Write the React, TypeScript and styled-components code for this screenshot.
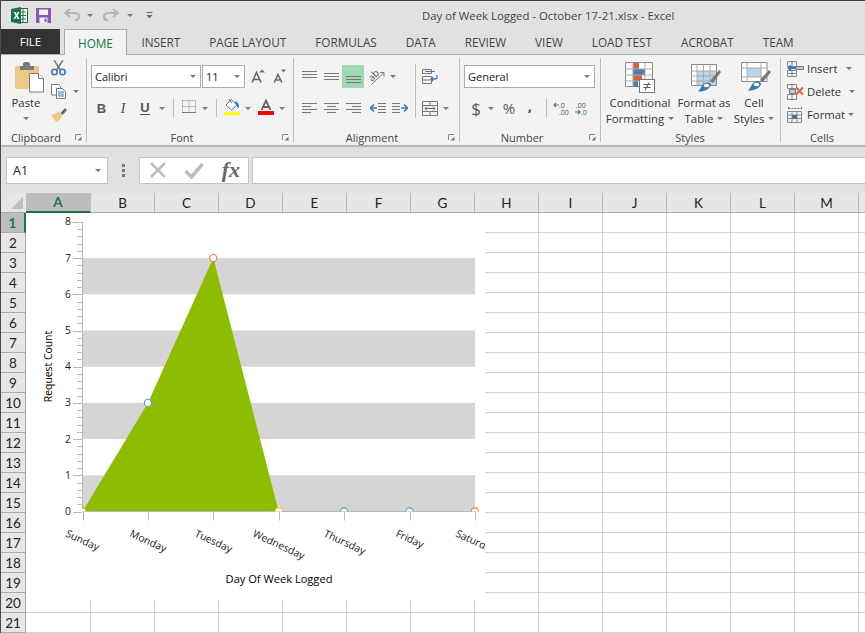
import React from "react";
import styled, { createGlobalStyle } from "styled-components";

const Global = createGlobalStyle`
  html, body { margin: 0; padding: 0; background: #fff; }
  body { width: 865px; height: 633px; overflow: hidden; }
  #root { width: 865px; height: 633px; }
  svg { flex: none; }
`;

const UI = `"Open Sans", "Noto Sans", sans-serif`;
const CELL = `Lato, "Noto Sans", sans-serif`;

const Page = styled.div`
  width: 865px; height: 633px; overflow: hidden; display: flex; flex-direction: column;
  font-family: ${UI}; color: #333; border-left: 1px solid #4a4a4a; box-sizing: border-box;
`;
const TitleBar = styled.header`
  height: 29px; flex: none; background: #e1e1e1; border-top: 1px solid #444; box-sizing: border-box;
  display: flex; align-items: center; padding-left: 10px;
`;
const QuickSlot = styled.span<{ $w: number }>`
  width: ${p => p.$w}px; display: flex; align-items: center; justify-content: center; flex: none;
`;
const TitleText = styled.div`
  font-size: 11.37px; color: #444; margin-left: 259px; white-space: nowrap;
`;
const TabBar = styled.nav`
  height: 25px; flex: none; background: #e1e1e1; display: flex; align-items: stretch; position: relative;
`;
const FileTab = styled.div`
  width: 59px; background: #333; color: #fff; font-size: 11.5px; display: flex; align-items: center; justify-content: center; margin-right: 4px;
`;
const Tab = styled.div<{ $active?: boolean; $pad?: number }>`
  font-size: 11.75px; padding: 0 ${p => p.$pad ?? 14.5}px; display: flex; align-items: center; white-space: nowrap;
  color: ${p => (p.$active ? "#217346" : "#444")};
  ${p => p.$active ? "background:#f3f3f3;border:1px solid #ababab;border-bottom:none;margin-bottom:-1px;position:relative;z-index:1;" : ""}
`;
const Ribbon = styled.div`
  height: 93px; flex: none; background: #f3f3f3; border-top: 1px solid #ababab; border-bottom: 2px solid #b5b5b5;
  box-sizing: border-box; display: flex;
`;
const Group = styled.section<{ $w: number; $pl?: number; $last?: boolean }>`
  width: ${p => p.$w}px; flex: none; box-sizing: border-box; margin: 3px 0; display: flex; flex-direction: column;
  padding-left: ${p => p.$pl ?? 0}px; position: relative;
  ${p => (p.$last ? "" : "border-right: 1px solid #bdbdbd;")}
`;
const GroupBody = styled.div`
  flex: 1; display: flex; min-height: 0;
`;
const GroupLabel = styled.div<{ $cx: number }>`
  height: 16px; font-size: 11px; color: #444; text-align: center; line-height: 16px; white-space: nowrap;
  width: ${p => p.$cx * 2}px; margin-bottom: -4px;
`;
const Launcher = styled.span`
  position: absolute; right: 4px; bottom: 1px; width: 7px; height: 7px; display: block;
`;
const Column = styled.div<{ $w?: number; $gap?: number; $pt?: number }>`
  display: flex; flex-direction: column; align-items: center;
  ${p => (p.$w ? `width:${p.$w}px;` : "")} flex: none;
  gap: ${p => p.$gap ?? 0}px; padding-top: ${p => p.$pt ?? 0}px;
`;
const Stack = styled.div<{ $pt?: number; $gap?: number; $mt?: number }>`
  display: flex; flex-direction: column; padding-top: ${p => p.$pt ?? 7}px; gap: ${p => p.$gap ?? 10}px; flex: none;
  margin-top: ${p => p.$mt ?? 0}px;
`;
const Row = styled.div<{ $h?: number }>`
  display: flex; align-items: center; height: ${p => p.$h ?? 23}px; flex: none;
`;
const Cell = styled.span<{ $w: number; $ml?: number; $active?: boolean }>`
  width: ${p => p.$w}px; height: 100%; margin-left: ${p => p.$ml ?? 0}px; flex: none;
  display: flex; align-items: center; justify-content: center;
  ${p => (p.$active ? "background:#a0d8b4;" : "")}
`;
const VSep = styled.i<{ $h?: number }>`
  width: 1px; height: ${p => p.$h ?? 18}px; background: #bdbdbd; display: block;
`;
const Caret = styled.i<{ $ml?: number; $mt?: number }>`
  display: block; flex: none; width: 0; height: 0; border-left: 3px solid transparent; border-right: 3px solid transparent;
  border-top: 3px solid #777; margin-left: ${p => p.$ml ?? 0}px; margin-top: ${p => p.$mt ?? 0}px;
`;
const Select = styled.div<{ $w: number; $ml?: number }>`
  width: ${p => p.$w}px; height: 23px; box-sizing: border-box; background: #fff; border: 1px solid #ababab; flex: none;
  margin-left: ${p => p.$ml ?? 0}px; display: flex; align-items: center; justify-content: space-between; padding: 0 4px 0 3px;
  font-family: ${UI}; font-size: 11px; color: #222;
`;
const IconArt = styled.span<{ $ml: number; $h: number }>`
  display: block; height: ${p => p.$h}px; margin-left: ${p => p.$ml}px; flex: none;
`;
const BigLabel = styled.div`
  font-size: 11.4px; color: #333; line-height: 15.5px; text-align: center; white-space: nowrap;
  display: flex; align-items: center; justify-content: center; gap: 4px;
`;
const CellsRow = styled.div`
  display: flex; align-items: center; height: 23px; flex: none; font-size: 11.3px; color: #333;
`;
const CellsText = styled.span`
  margin-left: 3px; white-space: nowrap;
`;
const FormulaBar = styled.div`
  height: 46px; flex: none; background: #e1e1e1; display: flex; align-items: center; padding-left: 5px; box-sizing: border-box;
`;
const NameBox = styled.div`
  width: 102px; height: 27px; box-sizing: border-box; background: #fff; border: 1px solid #c4c4c4; display: flex; align-items: center; justify-content: space-between;
  padding: 0 6px; font-family: ${UI}; font-size: 12.5px; color: #222;
`;
const Dots = styled.span`
  width: 31px; display: flex; align-items: center; justify-content: center; flex: none;
`;
const FxButtons = styled.div`
  width: 110px; height: 27px; box-sizing: border-box; background: #fff; border: 1px solid #c4c4c4; display: flex; align-items: center; justify-content: space-between; padding: 0 8px 0 9px;
`;
const FormulaInput = styled.div`
  flex: 1; height: 27px; margin-left: 3px; box-sizing: border-box; background: #fff; border: 1px solid #c4c4c4; border-right: none;
`;
const FxText = styled.span`
  font-family: "Liberation Serif", serif; font-style: italic; font-weight: 700; font-size: 22px; color: #666; line-height: 1;
`;
const Sheet = styled.div`
  flex: 1; position: relative; overflow: hidden; background: #fff;
`;
const HeadRow = styled.div`
  display: flex; height: 20px;
`;
const Corner = styled.div`
  width: 25px; flex: none; background: #e6e6e6; border-bottom: 1px solid #ababab; box-sizing: border-box; position: relative; display: flex; align-items: flex-end; justify-content: flex-end; padding: 0 3px 3px 0;
`;
const ColHead = styled.div<{ $w: number; $sel?: boolean }>`
  width: ${p => p.$w}px; flex: none; box-sizing: border-box; font-family: ${CELL}; font-size: 13.5px; display: flex; align-items: center; justify-content: center;
  background: ${p => (p.$sel ? "#bdbdbd" : "#e6e6e6")}; color: ${p => (p.$sel ? "#217346" : "#222")};
  border-right: 1px solid ${p => (p.$sel ? "#bdbdbd" : "#b8b8b8")};
  border-bottom: ${p => (p.$sel ? "2px solid #217346" : "1px solid #ababab")};
  ${p => (p.$sel ? "font-weight:700;" : "")}
`;
const GridRow = styled.div`
  display: flex; height: 20px;
`;
const RowHead = styled.div<{ $sel?: boolean }>`
  width: 25px; flex: none; box-sizing: border-box; font-family: ${CELL}; font-size: 13.5px; display: flex; align-items: center; justify-content: center;
  background: ${p => (p.$sel ? "#bdbdbd" : "#e6e6e6")}; color: ${p => (p.$sel ? "#217346" : "#222")};
  border-bottom: 1px solid #ababab;
  border-right: ${p => (p.$sel ? "2px solid #217346" : "1px solid #ababab")};
  ${p => (p.$sel ? "font-weight:700;" : "")}
`;
const GridCell = styled.div<{ $w: number }>`
  width: ${p => p.$w}px; flex: none; box-sizing: border-box; border-right: 1px solid #d4d4d4; border-bottom: 1px solid #d4d4d4;
`;
const ChartLayer = styled.svg`
  position: absolute; left: 25px; top: 20px; width: 459px; height: 387px; background: #fff; display: block;
`;
const ChartText = styled.text<{ $size: number }>`
  font-family: ${UI}; font-size: ${p => p.$size}px; fill: #000;
`;
const TickLabel = styled.text`
  font-family: ${UI}; font-size: 10.3px; fill: #222;
`;

/* ---------- icons ---------- */
const ExcelLogo = () => (
  <svg width="17" height="17" viewBox="0 0 17 17">
    <rect x="6" y="1.500" width="10.500" height="14" fill="#fff" stroke="#1e7145" />
    <path d="M9 5h6M9 8.500h6M9 12h6M12 2v13" stroke="#1e7145" />
    <path d="M0 2l10-2v17L0 15z" fill="#1e7145" />
    <path d="M2.600 5h1.900l1 2.200L6.600 5h1.800L6.500 8.500 8.500 12H6.600L5.400 9.800 4.300 12H2.500l2.100-3.500z" fill="#fff" />
  </svg>
);
const SaveIcon = () => (
  <svg width="15" height="15" viewBox="0 0 15 15">
    <path d="M0 0h15v15H0z" fill="#8c56b3" />
    <rect x="3" y="1.500" width="9" height="5.500" fill="#f4eef8" />
    <rect x="3.500" y="9.500" width="8" height="5.500" fill="#f4eef8" />
    <rect x="8.500" y="10.500" width="2" height="3.500" fill="#8c56b3" />
  </svg>
);
const UndoIcon = ({ flip }: { flip?: boolean }) => (
  <svg width="17" height="14" viewBox="0 0 17 14" style={flip ? { transform: "scaleX(-1)" } : undefined}>
    <path d="M6 1L1.500 5 6 9M2 5h8.500c3.500 0 4.500 2 4.500 3.500S14 12 11 12.500" fill="none" stroke="#b4b4b4" strokeWidth="2.200" />
  </svg>
);
const CustomizeIcon = () => (
  <svg width="7" height="7" viewBox="0 0 7 7">
    <path d="M0.500 0.500h6" stroke="#666" />
    <path d="M0.500 3h6L3.500 6.500z" fill="#666" />
  </svg>
);
const PasteIcon = () => (
  <svg width="30" height="31" viewBox="0 0 30 31" style={{ display: "block" }}>
    <rect x="0" y="4" width="24" height="23" rx="1.500" fill="#edc987" />
    <path d="M5 8V4h3V1.500L9.500 0h4L15 1.500V4h4v4z" fill="#7a7a7a" />
    <path d="M14.500 11.500h9l5 5v13.500h-14z" fill="#fff" stroke="#7c7c7c" />
    <path d="M23.500 11.500v5h5" fill="#fff" stroke="#7c7c7c" />
  </svg>
);
const ScissorsIcon = () => (
  <svg width="15" height="16" viewBox="0 0 15 16">
    <path d="M3 0l6.500 10M12 0L5.500 10" stroke="#777" strokeWidth="1.400" />
    <circle cx="3.500" cy="12" r="2.700" fill="none" stroke="#3f78ad" strokeWidth="1.600" />
    <circle cx="11.500" cy="12" r="2.700" fill="none" stroke="#3f78ad" strokeWidth="1.600" />
  </svg>
);
const CopyIcon = () => (
  <svg width="15" height="15" viewBox="0 0 15 15">
    <path d="M.5.500h7l2 2V11H.5z" fill="#fff" stroke="#777" />
    <path d="M5.500 4.500h6l3 3v7h-9z" fill="#fff" stroke="#777" />
    <path d="M7 8h6M7 10h6M7 12h6" stroke="#3f78ad" />
  </svg>
);
const BrushIcon = () => (
  <svg width="16" height="15" viewBox="0 0 16 15">
    <path d="M9.500 6L14 1l2 2-4.500 5z" fill="#666" />
    <path d="M11 9L8 4.500 5 6.500 0 8l5 7 4-2z" fill="#edc987" />
  </svg>
);
const LauncherIcon = () => (
  <svg width="7" height="7" viewBox="0 0 7 7" style={{ display: "block" }}>
    <path d="M.5 6V.5H6" fill="none" stroke="#888" />
    <path d="M6.500 2.500v4h-4z" fill="#777" />
  </svg>
);
const GrowA = ({ down }: { down?: boolean }) => (
  <svg width="16" height="16" viewBox="0 0 16 16">
    <path d={down ? "M1.200 13.500L5 5.500l3.800 8M2.600 11h4.800" : "M2 13.500l4.500-10 4.500 10M3.600 10.500h5.800"} fill="none" stroke="#666" strokeWidth="1.600" />
    <path d={down ? "M8 .5h5L10.500 3.500z" : "M9 3.500h6L12 .5z"} fill="#3f78ad" />
  </svg>
);
const Letter = styled.span<{ $b?: boolean; $i?: boolean; $u?: boolean }>`
  font-family: "Liberation Serif", serif; font-size: 15px; color: #555; line-height: 1; font-weight: ${p => (p.$b ? 700 : 400)};
  font-style: ${p => (p.$i ? "italic" : "normal")}; ${p => (p.$u ? "border-bottom: 1.500px solid #555; font-size: 13px; font-family: 'Liberation Sans', sans-serif; font-weight:700;" : "")}
  ${p => (p.$b ? "font-family:'Liberation Sans',sans-serif;font-size:13px;" : "")}
`;
const BordersIcon = () => (
  <svg width="14" height="16" viewBox="0 0 14 16">
    <path d="M.5.500h13v12M.5.500v12M7 .5v12M.5 6.500h13" fill="none" stroke="#888" strokeDasharray="1 1" />
    <path d="M0 12.500h14" stroke="#777" />
  </svg>
);
const FillIcon = () => (
  <svg width="18" height="20" viewBox="0 0 18 20">
    <path d="M3 7l5-5.500 6 5.500-5.500 5z" fill="#fff" stroke="#666" />
    <path d="M6 1l2.500 4" stroke="#666" fill="none" />
    <path d="M12 3.500c2.500 0 4 2 4 5l-1 2-2-4z" fill="#3f78ad" />
    <rect x="1" y="14" width="16" height="3" fill="#ffff00" />
  </svg>
);
const FontColorIcon = () => (
  <svg width="18" height="20" viewBox="0 0 18 20">
    <path d="M5.500 12L10 2.500 14.500 12M6.800 9h6.400" fill="none" stroke="#666" strokeWidth="1.800" />
    <rect x="2" y="13" width="16" height="4" fill="#ff0000" />
  </svg>
);
const Lines = ({ d, w = 15 }: { d: string; w?: number }) => (
  <svg width={w} height="13" viewBox={`0 0 ${w} 13`}><path d={d} stroke="#777" fill="none" /></svg>
);
const OrientIcon = () => (
  <svg width="17" height="16" viewBox="0 0 17 16">
    <text x="1" y="10" fontSize="10" fontFamily="'Open Sans',sans-serif" fill="#555" transform="rotate(-45 6 8)">ab</text>
    <path d="M3.500 15.500L15.500 4M12 3.500h4v4" stroke="#777" fill="none" />
  </svg>
);
const IndentIcon = ({ flip }: { flip?: boolean }) => (
  <svg width="16" height="13" viewBox="0 0 16 13" style={flip ? { transform: "scaleX(-1)" } : undefined}>
    <path d="M8 1.500h8M8 4.500h8M8 7.500h8M8 10.500h8" stroke="#777" />
    <path d="M4 2.500L.5 6 4 9.500M1 6h6" fill="none" stroke="#3f78ad" strokeWidth="1.600" />
  </svg>
);
const WrapIcon = () => (
  <svg width="16" height="16" viewBox="0 0 16 16">
    <path d="M.5.500h9v4h-9zM.5 7.500h9v7h-9zM.5 11h9" fill="none" stroke="#777" />
    <path d="M3 2.500h10" stroke="#3f78ad" />
    <path d="M15 6v2.500c0 1-.5 1.500-1.500 1.500H9M11 8l-2 2 2 2" fill="none" stroke="#3f78ad" strokeWidth="1.300" />
  </svg>
);
const MergeIcon = () => (
  <svg width="16" height="15" viewBox="0 0 16 15">
    <path d="M.5.500h15v14H.5zM.5 4.500h15M.5 10.500h15M8 .5v4M8 10.500v4" fill="none" stroke="#777" />
    <path d="M3 7.500h10M5 5.500l-2 2 2 2M11 5.500l2 2-2 2" fill="none" stroke="#3f78ad" />
  </svg>
);
const Glyph = styled.span<{ $size?: number; $lift?: number; $bold?: boolean }>`
  font-family: ${UI}; font-size: ${p => p.$size ?? 15}px; color: #555; line-height: 1; font-weight: ${p => (p.$bold ? 700 : 400)};
  margin-bottom: ${p => p.$lift ?? 0}px;
`;
const DecimalIcon = ({ more }: { more?: boolean }) => (
  <svg width="19" height="15" viewBox="0 0 19 15">
    <text x={more ? 6 : 1} y="6.500" fontSize="7" fontFamily="'Open Sans',sans-serif" fill="#555">{more ? ".0" : ".00"}</text>
    <text x="6" y="14" fontSize="7" fontFamily="'Open Sans',sans-serif" fill="#555">{more ? ".00" : ".0"}</text>
    <path d={more ? "M6 4H1M3 2L1 4l2 2" : "M0 11h5M3 9l2 2-2 2"} fill="none" stroke="#3f78ad" strokeWidth="1.200" />
  </svg>
);
const ConditionalIcon = () => (
  <svg width="30" height="31" viewBox="0 0 30 31">
    <path d="M.5.500h27v24H.5z" fill="#fff" stroke="#8a8a8a" />
    <rect x="8" y="1" width="6" height="6" fill="#d9603a" />
    <rect x="8" y="7" width="12" height="6" fill="#4a7fb5" />
    <rect x="8" y="13" width="9" height="6" fill="#d9603a" />
    <rect x="8" y="19" width="5" height="6" fill="#4a7fb5" />
    <path d="M8 .5v24M20 .5v24M.5 7h27M.5 13h27M.5 19h27" stroke="#aaa" fill="none" />
    <rect x="14.500" y="17.500" width="15" height="13" fill="#fff" stroke="#777" />
    <path d="M18.500 22.500h7M18.500 25.500h7M24 20.500l-4 8" stroke="#555" fill="none" />
  </svg>
);
const TableBrushIcon = () => (
  <svg width="30" height="31" viewBox="0 0 30 31" style={{ display: "block" }}>
    <path d="M.5 2.500h25v21H.5z" fill="#fff" stroke="#8a8a8a" />
    <rect x="6" y="9" width="19" height="14" fill="#bdd3e8" />
    <path d="M.5 9h25M.5 14h25M.5 19h25M6 2.500v21M12.500 2.500v21M19 2.500v21" stroke="#aaa" fill="none" />
    <path d="M28 8l2 2-8 11-3-2z" fill="#777" />
    <path d="M7 29.500c3-2 3-7 7-8.500 3-1 6 0 6 2-1 4-7 7-13 6.500z" fill="#3f78ad" />
    <ellipse cx="15.500" cy="23.500" rx="2.800" ry="1.800" fill="#fff" />
  </svg>
);
const CellBrushIcon = () => (
  <svg width="30" height="31" viewBox="0 0 30 31" style={{ display: "block" }}>
    <path d="M.5.500h25.500v19H.5z" fill="#fff" stroke="#8a8a8a" />
    <rect x="6" y="6" width="14" height="9" fill="#bdd3e8" />
    <path d="M.5 6h25.500M.5 15h25.500M6 .5v19M20 .5v19" stroke="#aaa" fill="none" />
    <path d="M28 8l2 2-8 10-3-2z" fill="#777" />
    <path d="M7 28.500c3-2 3-7 7-8.500 3-1 6 0 6 2-1 4-7 7-13 6.500z" fill="#3f78ad" />
    <ellipse cx="15.500" cy="22.500" rx="2.800" ry="1.800" fill="#fff" />
  </svg>
);
const InsertIcon = () => (
  <svg width="17" height="16" viewBox="0 0 17 16">
    <path d="M.5.500h9v5h-9zM.5 9.500h9v6h-9zM5 .5v5M5 9.500v6M.5 12.500h9" fill="none" stroke="#888" />
    <path d="M9 5.500h7.500v3H9z" fill="#bcd" stroke="#777" />
    <path d="M9 7H1M4 4.500L1.500 7 4 9.500" fill="none" stroke="#2f78bd" strokeWidth="1.900" />
  </svg>
);
const DeleteIcon = () => (
  <svg width="17" height="16" viewBox="0 0 17 16">
    <path d="M.5.500h9v4h-9zM.5 10.500h9v5h-9zM5 .5v4M5 10.500v5" fill="none" stroke="#888" />
    <path d="M2.500 5.500h6v4h-6z" fill="#bcd" stroke="#777" />
    <path d="M9 3.500l7 7M16 3.500l-7 7" stroke="#e0603a" strokeWidth="2" />
  </svg>
);
const FormatIcon = () => (
  <svg width="17" height="16" viewBox="0 0 17 16">
    <path d="M1.500 1.500h13M1.500 0v3M14.500 0v3" stroke="#3f78ad" strokeDasharray="2 1" />
    <path d="M.5 4.500h14v11H.5zM.5 8h14M.5 11.500h14M5 4.500v11M10 4.500v11" fill="none" stroke="#888" />
    <rect x="5" y="8" width="5" height="4" fill="#3f78ad" />
  </svg>
);
const BigCross = () => (
  <svg width="18" height="18" viewBox="0 0 18 18"><path d="M2 2l14 14M16 2L2 16" stroke="#bcbcbc" strokeWidth="2.500" /></svg>
);
const BigCheck = () => (
  <svg width="20" height="17" viewBox="0 0 20 17"><path d="M1.500 9l6 6L18.500 2" fill="none" stroke="#bcbcbc" strokeWidth="3.500" /></svg>
);
const DotsIcon = () => (
  <svg width="3" height="13" viewBox="0 0 3 13"><path d="M0 0h3v3H0zM0 5h3v3H0zM0 10h3v3H0z" fill="#777" /></svg>
);
const CornerTriangle = () => (
  <svg width="12" height="12" viewBox="0 0 12 12"><path d="M12 0v12H0z" fill="#bdbdbd" /></svg>
);

/* ---------- chart ---------- */
const Y0 = 511.5;
const UNIT = 36.2;
const X0 = 82.5;
const STEP = 65.4;
const DAYS = ["Sunday", "Monday", "Tuesday", "Wednesday", "Thursday", "Friday", "Saturday"];
const LABEL_X = [65, 129, 194, 252, 323, 395, 455];
const VALUES = [0, 3, 7, 0, 0, 0, 0];
const MARK = ["#8cbd00", "#5b9bd5", "#ed7d31", "#e6e61a", "#4fae6a", "#35b3b9", "#ed7d31"];
const BANDS = [6, 4, 2, 0];

const px = (i: number) => X0 + STEP * i;
const py = (v: number) => Y0 - UNIT * v;

const Chart = () => (
  <ChartLayer viewBox="26 213 459 387">
    <defs>
      <clipPath id="plotClip"><rect x="82" y="213" width="403" height="298.500" /></clipPath>
    </defs>
    {BANDS.map(b => (
      <rect key={b} x={X0} y={py(b + 1)} width={392.5} height={UNIT} fill="#d6d4d5" />
    ))}
    <polygon points={VALUES.slice(0, 4).map((v, i) => `${px(i)},${py(v)}`).join(" ")} fill="#8cbd00" />
    <path d={`M${X0} 222V${Y0}H475.500`} fill="none" stroke="#b8b8b8" />
    {Array.from({ length: 41 }, (_, i) => {
      const y = Math.round(py(i / 5)) + 0.5;
      return <path key={i} d={`M${i % 5 === 0 ? 73 : 77} ${y}H82`} stroke="#b8b8b8" />;
    })}
    {DAYS.map((_, i) => (
      <path key={i} d={`M${Math.round(px(i)) + 0.5} ${Y0}V520.500`} stroke="#b8b8b8" />
    ))}
    <g clipPath="url(#plotClip)">
      {VALUES.map((v, i) => (
        <circle key={i} cx={px(i)} cy={py(v)} r="3.600" fill="#fff" stroke={MARK[i]} strokeWidth="1.100" />
      ))}
    </g>
    {Array.from({ length: 9 }, (_, i) => (
      <TickLabel key={i} x="71" y={py(i) + 3.5} textAnchor="end">{i}</TickLabel>
    ))}
    {DAYS.map((d, i) => (
      <TickLabel key={d} x={LABEL_X[i]} y="536" transform={`rotate(25 ${LABEL_X[i]} 536)`}>{d}</TickLabel>
    ))}
    <ChartText $size={11.1} x="279" y="583" textAnchor="middle">Day Of Week Logged</ChartText>
    <ChartText $size={10.4} x="52" y="366.500" textAnchor="middle" transform="rotate(-90 52 366.500)">Request Count</ChartText>
  </ChartLayer>
);

/* ---------- page ---------- */
const TABS = ["INSERT", "PAGE LAYOUT", "FORMULAS", "DATA", "REVIEW", "VIEW", "LOAD TEST", "ACROBAT", "TEAM"];
const COLS = ["A", "B", "C", "D", "E", "F", "G", "H", "I", "J", "K", "L", "M", "N"];
const colW = (i: number) => (i === 0 ? 65 : 64);
const ROWS = Array.from({ length: 21 }, (_, i) => i + 1);

export default function App() {
  return (
    <Page>
      <Global />
      <TitleBar>
        <QuickSlot $w={17}><ExcelLogo /></QuickSlot>
        <QuickSlot $w={31}><SaveIcon /></QuickSlot>
        <QuickSlot $w={26}><UndoIcon /></QuickSlot>
        <QuickSlot $w={10}><Caret /></QuickSlot>
        <QuickSlot $w={30}><UndoIcon flip /></QuickSlot>
        <QuickSlot $w={10}><Caret /></QuickSlot>
        <QuickSlot $w={28}><CustomizeIcon /></QuickSlot>
        <TitleText>Day of Week Logged - October 17-21.xlsx - Excel</TitleText>
      </TitleBar>
      <TabBar>
        <FileTab>FILE</FileTab>
        <Tab $active $pad={13}>HOME</Tab>
        {TABS.map(t => <Tab key={t}>{t}</Tab>)}
      </TabBar>
      <Ribbon>
        <Group $w={86}>
          <GroupBody>
            <Column $w={50} $pt={4} $gap={2}>
              <IconArt $ml={7} $h={31}><PasteIcon /></IconArt>
              <BigLabel>Paste</BigLabel>
              <Caret $mt={4} />
            </Column>
            <Stack $pt={2} $gap={7}>
              <Row $h={16}><Cell $w={15}><ScissorsIcon /></Cell></Row>
              <Row $h={16}><Cell $w={15}><CopyIcon /></Cell><Caret $ml={7} /></Row>
              <Row $h={16}><Cell $w={16}><BrushIcon /></Cell></Row>
            </Stack>
          </GroupBody>
          <GroupLabel $cx={35}>Clipboard</GroupLabel>
          <Launcher><LauncherIcon /></Launcher>
        </Group>

        <Group $w={207} $pl={4}>
          <GroupBody>
            <Stack>
              <Row>
                <Select $w={110}><span>Calibri</span><Caret /></Select>
                <Select $w={43} $ml={1}><span>11</span><Caret /></Select>
                <Cell $w={20} $ml={3}><GrowA /></Cell>
                <Cell $w={20} $ml={3}><GrowA down /></Cell>
              </Row>
              <Row $h={20}>
                <Cell $w={21}><Letter $b>B</Letter></Cell>
                <Cell $w={22}><Letter $i>I</Letter></Cell>
                <Cell $w={22}><Letter $u>U</Letter></Cell>
                <Cell $w={12}><Caret /></Cell>
                <Cell $w={10}><VSep /></Cell>
                <Cell $w={21}><BordersIcon /></Cell>
                <Cell $w={12}><Caret /></Cell>
                <Cell $w={10}><VSep /></Cell>
                <Cell $w={22}><FillIcon /></Cell>
                <Cell $w={10}><Caret /></Cell>
                <Cell $w={24}><FontColorIcon /></Cell>
                <Cell $w={10}><Caret /></Cell>
              </Row>
            </Stack>
          </GroupBody>
          <GroupLabel $cx={91}>Font</GroupLabel>
          <Launcher><LauncherIcon /></Launcher>
        </Group>

        <Group $w={166} $pl={4}>
          <GroupBody>
            <Stack>
              <Row>
                <Cell $w={22}><Lines d="M0 1.500h15M0 4.500h15M0 7.500h15" /></Cell>
                <Cell $w={22}><Lines d="M0 3.500h15M0 6.500h15M0 9.500h15" /></Cell>
                <Cell $w={22} $active><Lines d="M0 6.500h15M0 9.500h15M0 12.500h15" /></Cell>
                <Cell $w={25}><OrientIcon /></Cell>
                <Cell $w={8}><Caret /></Cell>
              </Row>
              <Row $h={20}>
                <Cell $w={22}><Lines d="M0 1.500h15M0 4.500h9M0 7.500h15M0 10.500h9" /></Cell>
                <Cell $w={22}><Lines d="M0 1.500h15M3 4.500h9M0 7.500h15M3 10.500h9" /></Cell>
                <Cell $w={22}><Lines d="M0 1.500h15M6 4.500h9M0 7.500h15M6 10.500h9" /></Cell>
                <Cell $w={22} $ml={3}><IndentIcon /></Cell>
                <Cell $w={22}><IndentIcon flip /></Cell>
              </Row>
            </Stack>
            <Column $w={8} $pt={6}><VSep $h={54} /></Column>
            <Stack>
              <Row><Cell $w={22}><WrapIcon /></Cell></Row>
              <Row $h={20}><Cell $w={22}><MergeIcon /></Cell><Cell $w={10}><Caret /></Cell></Row>
            </Stack>
          </GroupBody>
          <GroupLabel $cx={74}>Alignment</GroupLabel>
          <Launcher><LauncherIcon /></Launcher>
        </Group>

        <Group $w={141} $pl={4}>
          <GroupBody>
            <Stack>
              <Select $w={131}><span>General</span><Caret /></Select>
              <Row $h={20}>
                <Cell $w={20} $ml={2}><Glyph $size={17}>$</Glyph></Cell>
                <Cell $w={10}><Caret /></Cell>
                <Cell $w={22} $ml={2}><Glyph $size={15}>%</Glyph></Cell>
                <Cell $w={20}><Glyph $size={15} $lift={6} $bold>,</Glyph></Cell>
                <Cell $w={12}><VSep /></Cell>
                <Cell $w={21}><DecimalIcon more /></Cell>
                <Cell $w={20} $ml={1}><DecimalIcon /></Cell>
              </Row>
            </Stack>
          </GroupBody>
          <GroupLabel $cx={58}>Number</GroupLabel>
          <Launcher><LauncherIcon /></Launcher>
        </Group>

        <Group $w={180} $pl={5}>
          <GroupBody>
            <Column $w={68} $pt={4} $gap={2}>
              <ConditionalIcon />
              <div>
                <BigLabel>Conditional</BigLabel>
                <BigLabel>Formatting <Caret /></BigLabel>
              </div>
            </Column>
            <Column $w={60} $pt={4} $gap={2}>
              <IconArt $ml={4} $h={31}><TableBrushIcon /></IconArt>
              <div>
                <BigLabel>Format as</BigLabel>
                <BigLabel>Table <Caret /></BigLabel>
              </div>
            </Column>
            <Column $w={40} $pt={4} $gap={2}>
              <IconArt $ml={4} $h={31}><CellBrushIcon /></IconArt>
              <div>
                <BigLabel>Cell</BigLabel>
                <BigLabel>Styles <Caret /></BigLabel>
              </div>
            </Column>
          </GroupBody>
          <GroupLabel $cx={84}>Styles</GroupLabel>
        </Group>

        <Group $w={84} $pl={6} $last>
          <GroupBody>
            <Stack $pt={0} $gap={0} $mt={-1}>
              <CellsRow><InsertIcon /><CellsText>Insert</CellsText><Caret $ml={9} /></CellsRow>
              <CellsRow><DeleteIcon /><CellsText>Delete</CellsText><Caret $ml={8} /></CellsRow>
              <CellsRow><FormatIcon /><CellsText>Format</CellsText><Caret $ml={3} /></CellsRow>
            </Stack>
          </GroupBody>
          <GroupLabel $cx={35}>Cells</GroupLabel>
        </Group>
      </Ribbon>
      <FormulaBar>
        <NameBox><span>A1</span><Caret /></NameBox>
        <Dots><DotsIcon /></Dots>
        <FxButtons><BigCross /><BigCheck /><FxText>fx</FxText></FxButtons>
        <FormulaInput />
      </FormulaBar>
      <Sheet>
        <HeadRow>
          <Corner><CornerTriangle /></Corner>
          {COLS.map((c, i) => <ColHead key={c} $w={colW(i)} $sel={i === 0}>{c}</ColHead>)}
        </HeadRow>
        {ROWS.map(r => (
          <GridRow key={r}>
            <RowHead $sel={r === 1}>{r}</RowHead>
            {COLS.map((c, i) => <GridCell key={c} $w={colW(i)} />)}
          </GridRow>
        ))}
        <Chart />
      </Sheet>
    </Page>
  );
}
